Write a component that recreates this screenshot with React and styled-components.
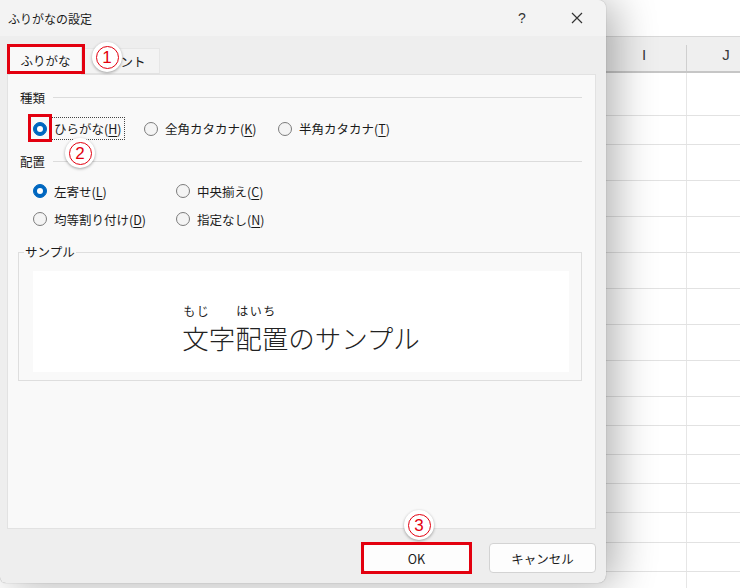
import React from "react";
import styled, { createGlobalStyle } from "styled-components";

const GlobalStyle = createGlobalStyle`
  html, body {
    margin: 0;
    padding: 0;
    background: #fff;
  }
  body {
    font-family: "Noto Sans CJK JP", "Noto Sans", sans-serif;
    color: #1b1b1b;
    overflow: hidden;
  }
  * {
    box-sizing: border-box;
  }
`;

const Screen = styled.div`
  position: relative;
  width: 740px;
  height: 588px;
  display: flex;
  overflow: hidden;
  background: #fff;
`;

/* ---------- dialog ---------- */

const Dialog = styled.div`
  position: relative;
  z-index: 1;
  flex: none;
  width: 606px;
  height: 583px;
  display: flex;
  flex-direction: column;
  background: #eeeeee;
  border-radius: 0 8px 8px 6px;
  box-shadow: 10px 2px 40px rgba(0, 0, 0, 0.3), 0 0 1px rgba(0, 0, 0, 0.4);
`;

const TitleBar = styled.div`
  height: 36px;
  flex: none;
  display: flex;
  align-items: center;
  padding-left: 8px;
  background: #f3f3f3;
  border-radius: 0 8px 0 0;
`;

const Title = styled.span`
  font-size: 12px;
  color: #1b1b1b;
`;

const TitleButtons = styled.div`
  margin-left: auto;
  margin-right: 6px;
  display: flex;
  gap: 9px;
`;

const TitleButton = styled.div`
  width: 46px;
  height: 30px;
  display: flex;
  align-items: center;
  justify-content: center;
  font-family: "Liberation Sans", sans-serif;
  font-size: 14px;
  color: #333;
`;

const TabStrip = styled.div`
  height: 38px;
  flex: none;
  display: flex;
  align-items: flex-end;
  padding-left: 9px;
`;

const Tab = styled.div`
  position: relative;
  display: flex;
  align-items: center;
  justify-content: center;
  width: ${(p) => (p.$active ? 73 : 78)}px;
  height: ${(p) => (p.$active ? 31 : 26)}px;
  margin-bottom: ${(p) => (p.$active ? -1 : 0)}px;
  z-index: ${(p) => (p.$active ? 1 : 0)};
  font-size: 12.5px;
  background: ${(p) => (p.$active ? "#f9f9f9" : "#f3f3f3")};
  border: 1px solid ${(p) => (p.$active ? "#e2e2e2" : "#e6e6e6")};
  border-bottom: ${(p) => (p.$active ? "none" : "1px solid #e2e2e2")};
  border-left: ${(p) => (p.$active ? "1px solid #e2e2e2" : "none")};

  ${(p) =>
    p.$marked &&
    `
    &::after {
      content: "";
      position: absolute;
      left: -3px;
      right: -4px;
      top: -1px;
      bottom: 1px;
      border: 3px solid #e3000f;
    }
  `}
`;

const Panel = styled.div`
  flex: none;
  height: 455px;
  margin: 0 10px 0 7px;
  padding: 13px 13px 0 12px;
  background: #f9f9f9;
  border: 1px solid #e2e2e2;
  display: flex;
  flex-direction: column;
`;

const GroupHead = styled.div`
  height: 18px;
  display: flex;
  align-items: center;
  gap: 8px;
  margin-top: ${(p) => p.$top || 0}px;
  font-size: 12.5px;

  &::after {
    content: "";
    flex: 1;
    height: 1px;
    background: #dcdcdc;
  }
`;

const RadioLine = styled.div`
  display: grid;
  grid-template-columns: 111px 134px auto;
  align-items: center;
  height: 22px;
  margin-top: 11px;
  padding-left: 13px;
`;

const RadioGrid = styled.div`
  display: grid;
  grid-template-columns: 143px auto;
  grid-auto-rows: 22px;
  row-gap: 6px;
  align-items: center;
  margin-top: 10px;
  padding-left: 13px;
`;

const Option = styled.label`
  display: flex;
  align-items: center;
  gap: 4px;
  font-size: 12.5px;
  white-space: nowrap;
`;

const Radio = styled.span`
  position: relative;
  flex: none;
  width: 14px;
  height: 14px;
  border-radius: 50%;
  background: ${(p) => (p.$checked ? "#0067c0" : "#f4f4f4")};
  border: 1px solid ${(p) => (p.$checked ? "#0067c0" : "#7c7c7c")};
  display: flex;
  align-items: center;
  justify-content: center;

  &::before {
    content: "";
    display: ${(p) => (p.$checked ? "block" : "none")};
    width: 6px;
    height: 6px;
    border-radius: 50%;
    background: #fff;
  }

  ${(p) =>
    p.$marked &&
    `
    &::after {
      content: "";
      position: absolute;
      left: -6px;
      right: -6px;
      top: -9px;
      bottom: -7px;
      border: 3px solid #e3000f;
    }
  `}
`;

const OptionText = styled.span`
  padding: 1px 2px;
  border: 1px dotted ${(p) => (p.$focus ? "#444" : "transparent")};
`;

const Key = styled.span`
  text-decoration: underline;
  text-underline-offset: 2px;
`;

const SampleBox = styled.fieldset`
  margin: 13px 0 0 -2px;
  padding: 10px 12px 7px 5px;
  border: 1px solid #dedede;
  height: 138px;
`;

const SampleLegend = styled.legend`
  padding: 0 1px;
  font-size: 12.5px;
  line-height: 18px;
`;

const SampleView = styled.div`
  margin-left: 9px;
  height: 101px;
  background: #fff;
  display: flex;
  justify-content: center;
  align-items: flex-start;
  padding-top: 33px;
`;

const Word = styled.span`
  display: inline-flex;
  flex-direction: column;
  align-items: flex-start;
`;

const RubyText = styled.span`
  height: 14px;
  font-size: 12px;
  line-height: 14px;
  letter-spacing: 1.5px;
  padding-left: 1px;
  color: #222;
`;

const BaseText = styled.span`
  margin-top: 6px;
  font-size: 26.5px;
  line-height: 27px;
  font-weight: 300;
  color: #222;
`;

const Footer = styled.div`
  display: flex;
  justify-content: flex-end;
  gap: 19px;
  padding: 14px 10px 0 0;
`;

const Button = styled.div`
  position: relative;
  width: 107px;
  height: 30px;
  display: flex;
  align-items: center;
  justify-content: center;
  font-size: 12.5px;
  background: #fdfdfd;
  border: 1px solid #d3d3d3;
  border-radius: 4px;

  ${(p) =>
    p.$marked &&
    `
    &::after {
      content: "";
      position: absolute;
      left: -3px;
      right: -3px;
      top: -2px;
      bottom: -2px;
      border: 3px solid #e3000f;
    }
  `}
`;

/* ---------- annotation badges ---------- */

const Badge = styled.div`
  position: absolute;
  z-index: 5;
  left: ${(p) => p.$x - 15}px;
  top: ${(p) => p.$y - 15}px;
  width: 30px;
  height: 30px;
  border-radius: 50%;
  background: #fff;
  box-shadow: 0 1px 3px rgba(0, 0, 0, 0.35);
  display: flex;
  align-items: center;
  justify-content: center;
`;

const BadgeRing = styled.div`
  width: 23px;
  height: 23px;
  border-radius: 50%;
  border: 1.5px solid #e3000f;
  display: flex;
  align-items: center;
  justify-content: center;
  font-family: "Liberation Sans", sans-serif;
  font-size: 17px;
  line-height: 1;
  color: #e3000f;
`;

/* ---------- spreadsheet behind ---------- */

const Sheet = styled.div`
  flex: 1;
  display: flex;
  flex-direction: column;
  overflow: hidden;
  background: #fff;
`;

const SheetTop = styled.div`
  height: 36px;
  flex: none;
`;

const ColumnHeader = styled.div`
  height: 37px;
  flex: none;
  display: grid;
  grid-template-columns: 80px 80px;
  background: #efefef;
  border-top: 1px solid #d8d8d8;
  border-bottom: 2px solid #c6c6c6;
`;

const HeadCell = styled.div`
  position: relative;
  display: flex;
  align-items: center;
  justify-content: center;
  padding-right: ${(p) => (p.$divider ? 0 : 4)}px;
  font-family: "Liberation Sans", sans-serif;
  font-size: 15px;
  color: #3a3a3a;

  ${(p) =>
    p.$divider &&
    `
    &::before {
      content: "";
      position: absolute;
      left: 0;
      top: 8px;
      bottom: 0;
      width: 1px;
      background: #cfcfcf;
    }
  `}
`;

const SheetRow = styled.div`
  height: ${(p) => p.$h}px;
  flex: none;
  display: grid;
  grid-template-columns: 80px 80px;
  border-bottom: 1.5px solid #e2e2e2;
`;

const SheetCell = styled.div`
  border-left: ${(p) => (p.$divider ? "1px solid #e6e6e6" : "none")};
`;

const rowHeights = [43, 29, 36, 36, 36, 36, 36, 36, 36, 29, 29, 29, 29, 30, 29, 20];

function CloseIcon() {
  return (
    <svg width="12" height="12" viewBox="0 0 12 12">
      <path d="M1 1 L11 11 M11 1 L1 11" stroke="#333" strokeWidth="1.2" />
    </svg>
  );
}

function Choice({ checked, marked, focus, label, k }) {
  return (
    <Option>
      <Radio $checked={checked} $marked={marked} />
      <OptionText $focus={focus}>
        {label}(<Key>{k}</Key>)
      </OptionText>
    </Option>
  );
}

export default function App() {
  return (
    <Screen>
      <GlobalStyle />
      <Dialog>
        <TitleBar>
          <Title>ふりがなの設定</Title>
          <TitleButtons>
            <TitleButton>?</TitleButton>
            <TitleButton>
              <CloseIcon />
            </TitleButton>
          </TitleButtons>
        </TitleBar>

        <TabStrip>
          <Tab $active $marked>
            ふりがな
          </Tab>
          <Tab>フォント</Tab>
        </TabStrip>

        <Panel>
          <GroupHead>種類</GroupHead>
          <RadioLine>
            <Choice checked marked focus label="ひらがな" k="H" />
            <Choice label="全角カタカナ" k="K" />
            <Choice label="半角カタカナ" k="T" />
          </RadioLine>

          <GroupHead $top={13}>配置</GroupHead>
          <RadioGrid>
            <Choice checked label="左寄せ" k="L" />
            <Choice label="中央揃え" k="C" />
            <Choice label="均等割り付け" k="D" />
            <Choice label="指定なし" k="N" />
          </RadioGrid>

          <SampleBox>
            <SampleLegend>サンプル</SampleLegend>
            <SampleView>
              <Word>
                <RubyText>もじ</RubyText>
                <BaseText>文字</BaseText>
              </Word>
              <Word>
                <RubyText>はいち</RubyText>
                <BaseText>配置</BaseText>
              </Word>
              <Word>
                <RubyText />
                <BaseText>のサンプル</BaseText>
              </Word>
            </SampleView>
          </SampleBox>
        </Panel>

        <Footer>
          <Button $marked>OK</Button>
          <Button>キャンセル</Button>
        </Footer>
      </Dialog>

      <Sheet>
        <SheetTop />
        <ColumnHeader>
          <HeadCell>I</HeadCell>
          <HeadCell $divider>J</HeadCell>
        </ColumnHeader>
        {rowHeights.map((h, i) => (
          <SheetRow key={i} $h={h}>
            <SheetCell />
            <SheetCell $divider />
          </SheetRow>
        ))}
      </Sheet>

      <Badge $x={107} $y={57}>
        <BadgeRing>1</BadgeRing>
      </Badge>
      <Badge $x={80} $y={153}>
        <BadgeRing>2</BadgeRing>
      </Badge>
      <Badge $x={419} $y={525}>
        <BadgeRing>3</BadgeRing>
      </Badge>
    </Screen>
  );
}
